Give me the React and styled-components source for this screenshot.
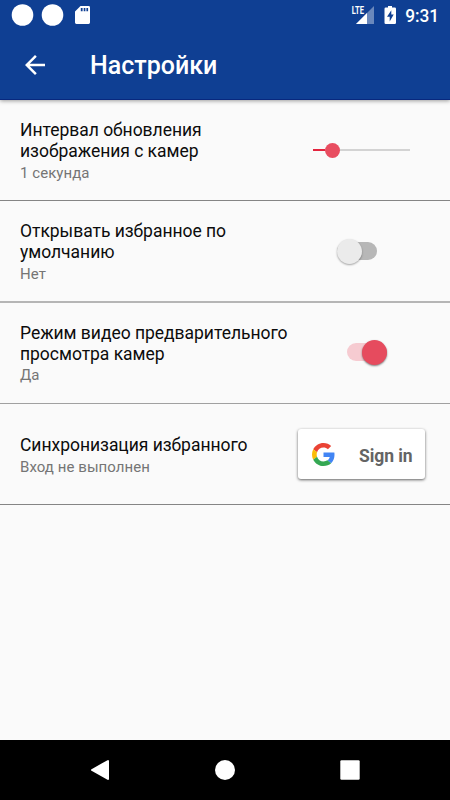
import React from "react";
import styled, { createGlobalStyle } from "styled-components";

const GlobalStyle = createGlobalStyle`
  * { box-sizing: border-box; }
  body { margin: 0; background: #fafafa; font-family: Roboto, "Noto Sans", sans-serif; }
`;

const Screen = styled.div`
  width: 450px;
  height: 800px;
  display: flex;
  flex-direction: column;
  overflow: hidden;
  background: #fafafa;
`;

const Header = styled.header`
  height: 100px;
  flex: none;
  background: #0f3f93;
  border-bottom: 1px solid #08287e;
  box-shadow: 0 1px 4px rgba(0, 0, 0, 0.38);
  color: #fff;
`;

const StatusBar = styled.div`
  height: 30px;
  display: flex;
  justify-content: space-between;
`;

const Toolbar = styled.div`
  height: 70px;
  display: flex;
  align-items: center;
  padding: 2px 20px 0;
`;

const BackButton = styled.button`
  width: 30px;
  height: 30px;
  margin-right: 40px;
  margin-bottom: 2px;
  padding: 0;
  border: 0;
  background: none;
`;

const Title = styled.h1`
  margin: 0;
  font-size: 25px;
  line-height: 30px;
  font-weight: 500;
`;

const Glyph = styled.svg`
  display: block;
  flex: none;
`;

const Settings = styled.main`
  flex: 1;
`;

const Row = styled.section`
  height: ${(p) => p.$height}px;
  display: grid;
  grid-template-columns: 278px 1fr;
  padding-left: 20px;
  border-bottom: ${(p) => p.$line};
`;

const Label = styled.div`
  padding-top: ${(p) => p.$top}px;
`;

const Name = styled.div`
  font-size: 17.5px;
  line-height: 20.5px;
  letter-spacing: -0.03px;
  color: #0c0c0c;
  white-space: pre-line;
`;

const Value = styled.div`
  margin-top: ${(p) => p.$gap ?? 2}px;
  font-size: 15px;
  line-height: 20px;
  letter-spacing: 0.06px;
  color: #757575;
`;

const Control = styled.div`
  padding: ${(p) => p.$inset};
`;

const SliderTrack = styled.div`
  width: 97px;
  height: 16px;
  display: flex;
  align-items: center;
`;

const SliderPart = styled.span`
  width: ${(p) => p.$width};
  height: 2px;
  background: ${(p) => p.$color};
`;

const SliderThumb = styled.span`
  width: 15px;
  height: 15px;
  flex: none;
  border-radius: 50%;
  background: #e84d60;
`;

const SwitchTrack = styled.div`
  width: 40px;
  height: 18px;
  display: flex;
  align-items: center;
  justify-content: ${(p) => (p.$on ? "flex-end" : "flex-start")};
  border-radius: 9px;
  background: ${(p) => (p.$on ? "#f6cbd1" : "#b7b7b7")};
`;

const SwitchThumb = styled.span`
  width: 25px;
  height: 25px;
  flex: none;
  border-radius: 50%;
  background: ${(p) => (p.$on ? "#e64b5e" : "#ebebeb")};
  box-shadow: 0 1px 2px rgba(0, 0, 0, ${(p) => (p.$on ? 0.5 : 0.35)});
`;

const SignIn = styled.button`
  width: 127px;
  height: 50px;
  display: flex;
  align-items: center;
  padding: 1px 0 0 14px;
  border: 0;
  border-radius: 3px;
  background: #fff;
  box-shadow: 0 1px 3px rgba(0, 0, 0, 0.62);
  color: #646464;
  font: 700 17.5px/20px Roboto, sans-serif;
`;

const SignInText = styled.span`
  margin-left: 24px;
  padding-top: 2px;
  letter-spacing: -0.08px;
  white-space: nowrap;
`;

const NavBar = styled.nav`
  height: 60px;
  flex: none;
  background: #000;
`;

const Switch = ({ on }) => (
  <SwitchTrack $on={on}>
    <SwitchThumb $on={on} />
  </SwitchTrack>
);

const StatusIcons = () => (
  <StatusBar>
    <Glyph width="110" height="30" fill="#fff">
      <circle cx="22.5" cy="15" r="10.8" />
      <circle cx="52.5" cy="15" r="10.8" />
      <path fillRule="evenodd" d="M80.5 6H88.6Q90 6 90 7.4V22.6Q90 24 88.6 24H76.4Q75 24 75 22.6V11.5ZM80.8 8V11.2H82.6V8ZM83.7 8V11.2H85.4V8ZM86.4 8V11.2H88.1V8Z" />
    </Glyph>
    <Glyph width="110" height="30" fill="#fff">
      <path d="M34 6V24H16Z" opacity=".38" />
      <path d="M27 13V24H16Z" />
      <path d="M11 5H25V15H11Z" fill="#0f3f93" />
      <text x="11.8" y="14" fontSize="11.2" fontWeight="700" textLength="12.2" lengthAdjust="spacingAndGlyphs" fontFamily="Roboto">LTE</text>
      <path fillRule="evenodd" d="M48 6H52V7.5H54.7Q56 7.5 56 8.8V22.7Q56 24 54.7 24H45.8Q44.5 24 44.5 22.7V8.8Q44.5 7.5 45.8 7.5H48ZM51.3 10.2L47 16.8H49.7V21.4L53.7 14.6H51.3Z" />
      <text x="65.2" y="21.6" fontSize="17.5" fontWeight="500" fontFamily="Roboto" textLength="34" lengthAdjust="spacingAndGlyphs">9:31</text>
    </Glyph>
  </StatusBar>
);

const GoogleLogo = () => (
  <Glyph width="23" height="23" viewBox="0 0 48 48">
    <path fill="#EA4335" d="M24 9.5c3.54 0 6.71 1.22 9.21 3.6l6.85-6.85C35.9 2.38 30.47 0 24 0 14.62 0 6.51 5.38 2.56 13.22l7.98 6.19C12.43 13.72 17.74 9.5 24 9.5z" />
    <path fill="#4285F4" d="M46.98 24.55c0-1.57-.15-3.09-.38-4.55H24v9.02h12.94c-.58 2.96-2.26 5.48-4.78 7.18l7.73 6c4.51-4.18 7.09-10.36 7.09-17.65z" />
    <path fill="#FBBC05" d="M10.53 28.59c-.48-1.45-.76-2.99-.76-4.59s.27-3.14.76-4.59l-7.98-6.19C.92 16.46 0 20.12 0 24c0 3.88.92 7.54 2.56 10.78l7.97-6.19z" />
    <path fill="#34A853" d="M24 48c6.48 0 11.93-2.13 15.89-5.81l-7.73-6c-2.15 1.45-4.92 2.3-8.16 2.3-6.26 0-11.57-4.22-13.47-9.91l-7.98 6.19C6.51 42.62 14.62 48 24 48z" />
  </Glyph>
);

export default function App() {
  return (
    <Screen>
      <GlobalStyle />
      <Header>
        <StatusIcons />
        <Toolbar>
          <BackButton aria-label="Назад">
            <Glyph width="30" height="30" viewBox="0 0 24 24" fill="#fff">
              <path d="M20 11H7.83l5.59-5.59L12 4l-8 8 8 8 1.41-1.41L7.83 13H20v-2z" />
            </Glyph>
          </BackButton>
          <Title>Настройки</Title>
        </Toolbar>
      </Header>
      <Settings>
        <Row $height={101} $line="1px solid #858585">
          <Label $top={20}>
            <Name>{"Интервал обновления\nизображения с камер"}</Name>
            <Value>1 секунда</Value>
          </Label>
          <Control $inset="42px 0 0 15px">
            <SliderTrack>
              <SliderPart $width="12px" $color="#e3243e" />
              <SliderThumb />
              <SliderPart $width="70px" $color="#d3d3d3" />
            </SliderTrack>
          </Control>
        </Row>
        <Row $height={102} $line="2px solid #b5b5b5">
          <Label $top={20}>
            <Name>{"Открывать избранное по\nумолчанию"}</Name>
            <Value>Нет</Value>
          </Label>
          <Control $inset="41px 0 0 39px">
            <Switch on={false} />
          </Control>
        </Row>
        <Row $height={101} $line="1px solid #a0a0a0">
          <Label $top={20}>
            <Name>{"Режим видео предварительного\nпросмотра камер"}</Name>
            <Value $gap={1}>Да</Value>
          </Label>
          <Control $inset="40px 0 0 48.5px">
            <Switch on />
          </Control>
        </Row>
        <Row $height={101} $line="1px solid #858585">
          <Label $top={31}>
            <Name>Синхронизация избранного</Name>
            <Value $gap={1}>Вход не выполнен</Value>
          </Label>
          <Control $inset="25px 0 0 0">
            <SignIn>
              <GoogleLogo />
              <SignInText>Sign in</SignInText>
            </SignIn>
          </Control>
        </Row>
      </Settings>
      <NavBar>
        <Glyph width="450" height="60" fill="#fff">
          <path d="M92 30L108 21V39Z" stroke="#fff" strokeWidth="2" strokeLinejoin="round" />
          <circle cx="225" cy="30" r="10" />
          <rect x="340.3" y="20.3" width="19.4" height="19.4" rx="1.2" />
        </Glyph>
      </NavBar>
    </Screen>
  );
}
